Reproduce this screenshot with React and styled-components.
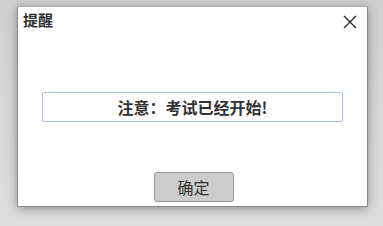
import React from "react";
import styled, { createGlobalStyle } from "styled-components";

const Global = createGlobalStyle`
  html, body { margin: 0; padding: 0; }
  body {
    width: 383px;
    height: 226px;
    background: linear-gradient(#d0d0d0, #dedede);
    font-family: "Noto Sans CJK SC", "Noto Sans", sans-serif;
    overflow: hidden;
  }
`;

const Page = styled.div`
  padding: 6px 15px 0 17px;
`;

const Dialog = styled.div`
  width: 349px;
  height: 199px;
  background: #fff;
  border: 1px solid #8a8a8a;
  border-top-color: #b0b0b0;
  box-shadow: 0 2px 10px rgba(0, 0, 0, 0.35);
  display: flex;
  flex-direction: column;
`;

const Header = styled.div`
  display: flex;
  justify-content: space-between;
  align-items: flex-start;
  padding: 3px 10px 0 5px;
  height: 30px;
`;

const Title = styled.div`
  font-size: 15px;
  font-weight: 700;
  line-height: 20px;
  color: #333;
`;

const Close = styled.button`
  border: 0;
  background: none;
  padding: 0;
  margin-top: 5px;
  width: 14px;
  height: 14px;
  display: flex;
`;

const Body = styled.div`
  display: flex;
  justify-content: center;
  padding-top: 52px;
`;

const Message = styled.div`
  width: 299px;
  height: 28px;
  border: 1px solid #a8bfe6;
  border-radius: 2px;
  display: flex;
  align-items: center;
  justify-content: center;
  font-size: 16px;
  font-weight: 700;
  color: #333;
`;

const Footer = styled.div`
  margin-top: auto;
  display: flex;
  justify-content: center;
  padding: 0 0 4px 2px;
`;

const Button = styled.button`
  width: 80px;
  height: 30px;
  background: #cccccc;
  border: 1px solid #9a9a9a;
  border-radius: 3px;
  font-family: "Noto Sans CJK SC", sans-serif;
  font-size: 16px;
  color: #333;
  padding: 0;
`;

export default function App() {
  return (
    <>
      <Global />
      <Page>
        <Dialog>
          <Header>
            <Title>提醒</Title>
            <Close aria-label="close">
              <svg width="14" height="14" viewBox="0 0 14 14">
                <path d="M1 1L13 13M13 1L1 13" stroke="#222" strokeWidth="1.2" fill="none" />
              </svg>
            </Close>
          </Header>
          <Body>
            <Message>注意：考试已经开始!</Message>
          </Body>
          <Footer>
            <Button>确定</Button>
          </Footer>
        </Dialog>
      </Page>
    </>
  );
}
